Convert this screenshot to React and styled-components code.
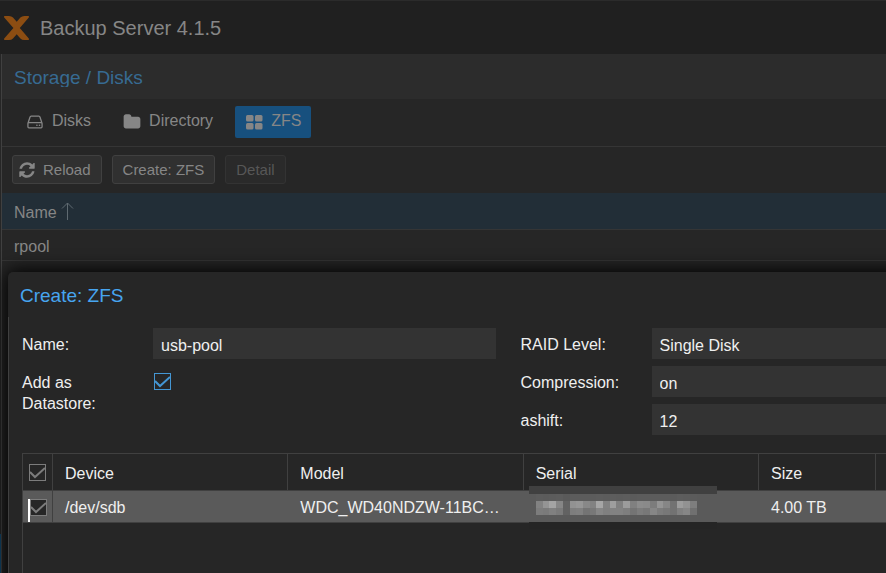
import React, { useState } from 'react';
import styled, { createGlobalStyle, css } from 'styled-components';

const GlobalStyle = createGlobalStyle`
  * {
    box-sizing: border-box;
  }

  body {
    margin: 0;
    background: #262626;
    color: #868686;
    font-family: "Liberation Sans", Arial, sans-serif;
    font-size: 16px;
    line-height: 21px;
  }

  button, input, select {
    font: inherit;
    color: inherit;
  }
`;

const Page = styled.div`
  position: relative;
  display: flex;
  flex-direction: column;
  min-height: 100vh;
  overflow: hidden;
`;

const TopBar = styled.header`
  display: flex;
  align-items: center;
  gap: 10px;
  height: 54px;
  padding-left: 3px;
  border-top: 1px solid #2b2b2b;
  background: #202020;
`;

const ProductName = styled.h1`
  margin: 0;
  padding-top: 2px;
  font-size: 20px;
  font-weight: normal;
`;

const Body = styled.div`
  flex: 1;
  display: flex;
`;

/* collapsed navigation, only its edge is left */
const Side = styled.div`
  display: flex;
  flex-direction: column;
  justify-content: flex-end;
  width: 1px;
`;

const SideSelection = styled.div`
  height: 39px;
  background: #12466a;
`;

const Main = styled.main`
  flex: 1;
  border-left: 1px solid #404040;
`;

const TitleBar = styled.div`
  display: flex;
  align-items: center;
  height: 45px;
  padding: 2px 12px 0;
  background: #2c2c2c;
`;

const PanelTitle = styled.h2`
  margin: 0;
  overflow: hidden;
  color: #376b93;
  font-size: 19px;
  font-weight: normal;
  line-height: 19px;
`;

const Tabs = styled.nav`
  display: flex;
  gap: 12px;
  padding: 7px 14px 8px;
  border-bottom: 1px solid #353535;
`;

const Tab = styled.button`
  display: flex;
  align-items: center;
  gap: 8px;
  height: 32px;
  padding: 0 10px;
  border: none;
  border-radius: 2px;
  background: ${props => (props.$active ? '#17507e' : 'transparent')};

  svg {
    width: 18px;
    height: 18px;
    fill: currentColor;
  }

  span {
    padding-bottom: 3px;
  }
`;

const Toolbar = styled.div`
  display: flex;
  gap: 10px;
  padding: 8px 10px 9px;
`;

const ToolButton = styled.button`
  display: flex;
  align-items: center;
  gap: 7px;
  height: 29px;
  padding: 0 10px;
  border: 1px solid #404040;
  border-radius: 3px;
  background: #303030;
  font-size: 15px;

  svg {
    width: 18px;
    height: 18px;
    margin-left: -5px;
    fill: currentColor;
  }

  &:disabled {
    border-color: #333;
    background: #2a2a2a;
    color: #575757;
  }
`;

const PoolTable = styled.table`
  width: 100%;
  border-collapse: separate;
  border-spacing: 0;

  th, td {
    padding: 0 12px;
    border-bottom: 1px solid #353535;
    font-weight: normal;
    text-align: left;
  }

  th {
    height: 37px;
    padding-top: 2px;
    background: #222e37;
  }

  td {
    height: 31px;
    padding-top: 2px;
  }

  svg {
    margin-left: 4px;
    vertical-align: -2px;
  }
`;

/* the dialog is wider than the page, its right side is cut off */
const Dialog = styled.section`
  position: absolute;
  top: 272px;
  left: 8px;
  right: -121px;
  bottom: -60px;
  display: flex;
  flex-direction: column;
  border-radius: 5px 5px 0 0;
  background: #262626;
  box-shadow: 0 0 18px 2px #000;
  color: #efefef;
`;

const DialogTitle = styled.h2`
  margin: 0;
  padding: 13px 12px 11px;
  color: #47a5f0;
  font-size: 19px;
  font-weight: normal;
`;

const DialogBody = styled.div`
  flex: 1;
  display: flex;
  flex-direction: column;
  gap: 18px;
  padding: 11px 13px;
  border-left: 1px solid #404040;
`;

const Form = styled.form`
  display: grid;
  grid-template-columns: 1fr 1fr;
  gap: 25px;
`;

const FieldColumn = styled.div`
  display: flex;
  flex-direction: column;
  gap: 7px;
`;

const Field = styled.div`
  display: grid;
  grid-template-columns: 131px 1fr;
  align-items: start;

  label {
    width: 100px;
    height: 31px;
    padding-top: 6px;
  }
`;

const control = css`
  width: 100%;
  height: 31px;
  padding: 4px 8px 0;
  border: none;
  border-radius: 0;
  outline: none;
  background: #333;
`;

const TextBox = styled.input`
  ${control}
`;

const Select = styled.select`
  ${control}
  appearance: none;
`;

const tick = color =>
  `url("data:image/svg+xml,%3Csvg xmlns='http://www.w3.org/2000/svg' viewBox='0 0 15 15'%3E%3Cpath d='M0 7l5 5L15 3' fill='none' stroke='%23${color}' stroke-width='2'/%3E%3C/svg%3E")`;

const CheckBox = styled.input.attrs({ type: 'checkbox' })`
  appearance: none;
  display: block;
  width: 17px;
  height: 17px;
  margin: 0;
  border: 1px solid ${props => (props.$accent ? '#4496d3' : '#7c7c7c')};
  outline: none;
  background-color: #262626;

  &:checked {
    background-image: ${props => tick(props.$accent ? '4496d3' : '7c7c7c')};
  }
`;

const CheckCell = styled.div`
  padding: 7px 1px;
`;

const Grid = styled.div`
  flex: 1;
  border: 1px solid #404040;
`;

const DiskTable = styled.table`
  width: 100%;
  table-layout: fixed;
  border-collapse: separate;
  border-spacing: 0;

  th, td {
    padding: 2px 18px 0 12px;
    overflow: hidden;
    border-bottom: 1px solid #404040;
    font-weight: normal;
    text-align: left;
    text-overflow: ellipsis;
    white-space: nowrap;
  }

  th {
    height: 37px;
    border-right: 1px solid #404040;
  }

  td {
    height: 32px;
    background: #5a5a5a;
  }

  th:first-child, td:first-child {
    width: 30px;
    padding: 0 0 0 6px;
    border-right: 1px solid #404040;
  }

  td:first-child {
    padding-left: 5px;
    vertical-align: bottom;
  }

  th:nth-child(n + 5) {
    width: 117px;
  }
`;

const RowCheck = styled.div`
  display: flex;
  height: 23px;
  border-left: 2px solid #fff;
`;

const SerialCell = styled.td`
  && {
    position: relative;
    overflow: visible;
  }

  svg {
    position: absolute;
    top: -5px;
    left: 5px;
  }
`;

const Icon = ({ path }) => (
  <svg viewBox="0 0 1792 1792" aria-hidden="true">
    <path d={path} />
  </svg>
);

const HDD =
  'M1168 1216q0 33-23.5 56.5t-56.5 23.5-56.5-23.5-23.5-56.5 23.5-56.5 56.5-23.5 56.5 23.5 23.5 56.5zm256 0q0 33-23.5 56.5t-56.5 23.5-56.5-23.5-23.5-56.5 23.5-56.5 56.5-23.5 56.5 23.5 23.5 56.5zm112 160v-320q0-13-9.5-22.5t-22.5-9.5h-1216q-13 0-22.5 9.5t-9.5 22.5v320q0 13 9.5 22.5t22.5 9.5h1216q13 0 22.5-9.5t9.5-22.5zm-1230-480h1180l-157-482q-4-13-16-21.5t-26-8.5h-782q-14 0-26 8.5t-16 21.5zm1358 160v320q0 66-47 113t-113 47h-1216q-66 0-113-47t-47-113v-320q0-25 16-75l197-606q17-53 63-86t101-33h782q55 0 101 33t63 86l197 606q16 50 16 75z';

const FOLDER =
  'M1728 608v704q0 92-66 158t-158 66h-1216q-92 0-158-66t-66-158v-960q0-92 66-158t158-66h320q92 0 158 66t66 158v32h672q92 0 158 66t66 158z';

const REFRESH =
  'M1639 1056q0 5-1 7-64 268-268 434.5t-478 166.5q-146 0-282.5-55t-243.5-157l-129 129q-19 19-45 19t-45-19-19-45v-448q0-26 19-45t45-19h448q26 0 45 19t19 45-19 45l-137 137q71 66 161 102t187 36q134 0 250-65t186-179q11-17 53-117 8-23 30-23h192q13 0 22.5 9.5t9.5 22.5zm25-800v448q0 26-19 45t-45 19h-448q-26 0-45-19t-19-45 19-45l138-138q-148-137-349-137-134 0-250 65t-186 179q-11 17-53 117-8 23-30 23h-199q-13 0-22.5-9.5t-9.5-22.5v-7q65-268 270-434.5t480-166.5q146 0 284 55.5t245 156.5l130-129q19-19 45-19t45 19 19 45z';

const TilesIcon = () => (
  <svg viewBox="0 0 18 18" aria-hidden="true">
    <rect x="1" y="2" width="7.5" height="6.500" rx="1.500" />
    <rect x="10" y="2" width="7.500" height="6.500" rx="1.500" />
    <rect x="1" y="10" width="7.500" height="6.500" rx="1.500" />
    <rect x="10" y="10" width="7.500" height="6.500" rx="1.500" />
  </svg>
);

const Logo = () => (
  <svg width="27" height="24" viewBox="0 0 27 24" aria-hidden="true">
    <path
      d="M1.500 0H6Q8.500 0 10 1.600L13.700 5.800 17.400 1.600Q18.900 0 21.400 0H25.500Q26.500 .8 25.800 1.600L16.800 12 25.800 22.400Q26.500 23.200 25.500 24H21.400Q18.900 24 17.400 22.400L13.700 18.200 10 22.400Q8.500 24 6 24H1.500Q.5 23.200 1.200 22.400L10.400 12 1.200 1.600Q.5 .8 1.500 0z"
      fill="#8c4d12"
    />
  </svg>
);

// grey levels of the hidden serial number, one entry for each block
const MOSAIC = [
  [92, 91, 92, 93, 90, 92, 92, 92, 92, 93, 92, 93, 92, 93, 91, 92, 92, 92, 92, 92, 91, 93, 92, 91],
  [130, 148, 164, 134, 98, 146, 150, 136, 130, 166, 130, 158, 128, 156, 128, 140, 138, 124, 148, 134, 114, 156, 146, 126],
  [124, 122, 128, 122, 98, 126, 128, 116, 120, 134, 128, 130, 130, 126, 116, 124, 120, 134, 124, 120, 114, 128, 134, 112],
];

const HiddenSerial = () => (
  <svg width="188" height="43" role="img" aria-label="Hidden serial number" shapeRendering="crispEdges">
    <rect width="188" height="8" fill="#404040" />
    <rect y="8" width="188" height="28" fill="#5a5a5a" />
    <rect y="36" width="188" height="7" fill="#252525" />
    {MOSAIC.map((row, y) =>
      row.map((level, x) => (
        <rect
          key={`${x}-${y}`}
          x={7 + Math.round(x * 6.7)}
          y={8 + y * 7}
          width="7"
          height="7"
          fill={`rgb(${level}, ${level}, ${level})`}
        />
      ))
    )}
  </svg>
);

const CreateZfs = () => {
  const [name, setName] = useState('usb-pool');
  const [ashift, setAshift] = useState('12');

  return (
    <Dialog role="dialog" aria-labelledby="dialog-title">
      <DialogTitle id="dialog-title">Create: ZFS</DialogTitle>
      <DialogBody>
        <Form>
          <FieldColumn>
            <Field>
              <label htmlFor="name">Name:</label>
              <TextBox id="name" value={name} onChange={e => setName(e.target.value)} />
            </Field>
            <Field>
              <label htmlFor="datastore">Add as Datastore:</label>
              <CheckCell>
                <CheckBox id="datastore" $accent defaultChecked />
              </CheckCell>
            </Field>
          </FieldColumn>
          <FieldColumn>
            <Field>
              <label htmlFor="raid">RAID Level:</label>
              <Select id="raid">
                <option>Single Disk</option>
              </Select>
            </Field>
            <Field>
              <label htmlFor="compression">Compression:</label>
              <Select id="compression">
                <option>on</option>
              </Select>
            </Field>
            <Field>
              <label htmlFor="ashift">ashift:</label>
              <TextBox id="ashift" value={ashift} onChange={e => setAshift(e.target.value)} />
            </Field>
          </FieldColumn>
        </Form>
        <Grid>
          <DiskTable>
            <thead>
              <tr>
                <th><CheckBox aria-label="Select all disks" defaultChecked /></th>
                <th>Device</th>
                <th>Model</th>
                <th>Serial</th>
                <th>Size</th>
                <th></th>
              </tr>
            </thead>
            <tbody>
              <tr>
                <td>
                  <RowCheck>
                    <CheckBox aria-label="Select /dev/sdb" defaultChecked />
                  </RowCheck>
                </td>
                <td>/dev/sdb</td>
                <td>WDC_WD40NDZW-11BCSS0</td>
                <SerialCell><HiddenSerial /></SerialCell>
                <td>4.00 TB</td>
                <td></td>
              </tr>
            </tbody>
          </DiskTable>
        </Grid>
      </DialogBody>
    </Dialog>
  );
};

const App = () => (
  <Page>
    <GlobalStyle />
    <TopBar>
      <Logo />
      <ProductName>Backup Server 4.1.5</ProductName>
    </TopBar>
    <Body>
      <Side>
        <SideSelection />
      </Side>
      <Main>
        <TitleBar>
          <PanelTitle>Storage / Disks</PanelTitle>
        </TitleBar>
        <Tabs>
          <Tab><Icon path={HDD} /><span>Disks</span></Tab>
          <Tab><Icon path={FOLDER} /><span>Directory</span></Tab>
          <Tab $active><TilesIcon /><span>ZFS</span></Tab>
        </Tabs>
        <Toolbar>
          <ToolButton><Icon path={REFRESH} />Reload</ToolButton>
          <ToolButton>Create: ZFS</ToolButton>
          <ToolButton disabled>Detail</ToolButton>
        </Toolbar>
        <PoolTable>
          <thead>
            <tr>
              <th>
                Name
                <svg width="13" height="18" viewBox="0 0 13 18" fill="none" stroke="#5f6a71" aria-hidden="true">
                  <path d="M6.500 18V1M1 6.500l5.500-5.500L12 6.500" />
                </svg>
              </th>
            </tr>
          </thead>
          <tbody>
            <tr>
              <td>rpool</td>
            </tr>
          </tbody>
        </PoolTable>
      </Main>
    </Body>
    <CreateZfs />
  </Page>
);

export default App;
